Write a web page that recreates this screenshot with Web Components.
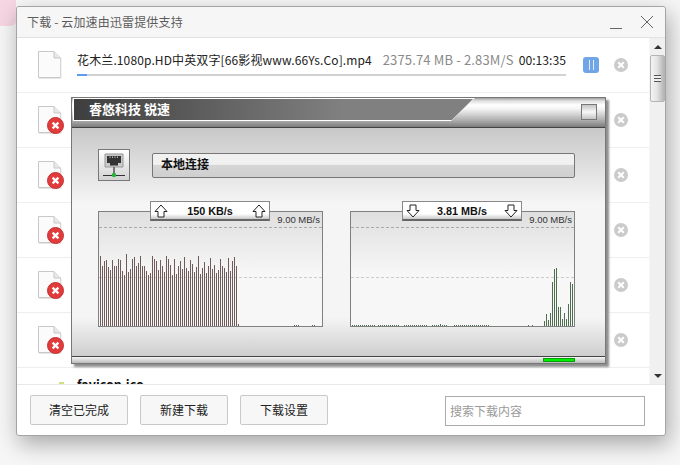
<!DOCTYPE html>
<html lang="zh">
<head>
<meta charset="utf-8">
<title>下载</title>
<style>
  html, body { margin: 0; height: 100%; }
  body {
    background: #f6f6f6;
    padding: 6px 0 0 16px;
    box-sizing: border-box;
    font-family: "Noto Sans CJK SC", "Noto Sans", sans-serif;
    overflow: hidden;
  }
  .desk-corner { position: absolute; left: 0; top: 0; width: 16px; height: 26px; background: #f6d6e2; border-bottom-right-radius: 5px; }
</style>
</head>
<body>
<div class="desk-corner"></div>
<dl-window heading="下载 - 云加速由迅雷提供支持">
  <dl-row name="花木兰.1080p.HD中英双字[66影视www.66Ys.Co].mp4" size="2375.74 MB - 2.83M/S" time="00:13:35" progress="2"></dl-row>
  <dl-row failed></dl-row>
  <dl-row failed></dl-row>
  <dl-row failed></dl-row>
  <dl-row failed></dl-row>
  <dl-row failed></dl-row>
  <dl-row name="favicon.ico" small></dl-row>
  <speed-panel slot="overlay" heading="睿悠科技 锐速" adapter="本地连接">
    <speed-chart dir="up" value="150 KB/s" max="9.00 MB/s" color="#705a5a"
      bars="1:70,2:60,3:65,4:66,5:59,6:56,7:66,8:60,9:60,10:67,11:66,12:55,13:51,14:72,15:54,16:57,17:67,18:69,19:60,20:63,21:70,22:60,23:60,24:55,25:51,26:53,27:70,28:67,29:65,30:56,31:66,32:60,33:54,34:70,35:67,36:61,37:51,38:67,39:52,40:60,41:65,42:57,43:69,44:58,45:55,46:66,47:62,48:54,49:59,50:70,51:52,52:58,53:64,54:53,55:60,56:68,57:57,58:61,59:53,60:56,61:67,62:60,63:58,64:54,65:68,66:55,67:65,68:69,69:60,70:2,98:1,99:1,100:1,107:1,108:1"></speed-chart>
    <speed-chart dir="down" value="3.81 MB/s" max="9.00 MB/s" color="#4f6e4f"
      bars="1:1,2:1,3:1,4:1,5:1,6:1,7:1,8:1,9:1,10:1,11:1,12:1,14:1,15:1,16:1,17:1,18:1,19:1,20:1,21:1,22:1,23:1,24:1,27:1,28:1,29:1,30:1,31:1,32:1,33:1,34:1,35:1,36:1,37:1,38:1,41:1,42:1,43:1,44:1,45:2,46:1,47:1,48:1,52:1,53:1,54:1,55:1,56:1,57:1,58:1,59:1,60:1,61:1,62:1,63:1,64:1,65:1,66:1,67:1,68:1,69:1,89:1,91:1,97:5,98:12,99:6,100:13,101:44,102:57,103:58,104:19,105:19,106:7,107:13,108:7,109:22,110:44,111:42"></speed-chart>
  </speed-panel>
</dl-window>

<script>
var icons = {
  page: '<path d="M1.5 .5H17L23.5 7V26.5H1.5Z" fill="#fbfbfb" stroke="#c8c8c8"/><path d="M17 .5V7H23.5" fill="#e8e8e8" stroke="#c8c8c8"/><path d="M2 27.5H24V8" fill="none" stroke="#e6e6e6"/>',
  up: '<path d="M7 1 13 7.5H10V13H4V7.5H1Z" fill="#fff" stroke="#222"/>',
  down: '<path d="M4 1H10V6.5H13L7 13 1 6.5H4Z" fill="#fff" stroke="#222"/>'
};

var dlWindow = document.createElement('template');
dlWindow.innerHTML = `
  <style>
    :host {
      display: flex;
      flex-direction: column;
      position: relative;
      box-sizing: border-box;
      width: 650px;
      height: 430px;
      background: #fff;
      border: 1px solid #a3a3a8;
      border-radius: 3px;
      box-shadow: 3px 8px 22px rgba(0,0,0,.32);
    }
    .bar {
      display: flex;
      align-items: center;
      height: 30px;
      flex: none;
      padding: 0 12px 0 10px;
      background: #f6f6f6;
      border-bottom: 1px solid #e2e2e2;
      border-radius: 3px 3px 0 0;
      color: #5c5c5c;
      font-size: 12px;
      letter-spacing: .15px;
    }
    .bar span { flex: 1; margin-top: -2px; }
    .bar svg { display: block; }
    .main { flex: 1; display: flex; min-height: 0; }
    .list { flex: 1; min-width: 0; overflow: hidden; }
    .foot {
      flex: none;
      display: flex;
      align-items: center;
      gap: 12px;
      height: 50px;
      padding: 0 20px 0 13px;
      border-top: 1px solid #e8e8e8;
    }
    .search {
      margin: 2px 0 0 auto;
      width: 200px;
      height: 30px;
      box-sizing: border-box;
      border: 1px solid #ababab;
      color: #9a9a9a;
      font-size: 12px;
      line-height: 27px;
      padding-left: 4px;
    }
  </style>
  <div class="bar">
    <span id="t"></span>
    <svg width="43" height="16" viewBox="0 0 43 16">
      <path d="M0 14.5H12" stroke="#666"/>
      <path d="M31 2 43 14M43 2 31 14" stroke="#666" fill="none"/>
    </svg>
  </div>
  <div class="main">
    <div class="list"><slot></slot></div>
    <dl-scrollbar></dl-scrollbar>
  </div>
  <div class="foot">
    <dl-button w="98">清空已完成</dl-button>
    <dl-button w="88">新建下载</dl-button>
    <dl-button w="88">下载设置</dl-button>
    <div class="search">搜索下载内容</div>
  </div>
  <slot name="overlay"></slot>
`;
customElements.define('dl-window', class extends HTMLElement {
  constructor() {
    super();
    var root = this.attachShadow({mode: 'open'});
    root.appendChild(dlWindow.content.cloneNode(true));
    root.getElementById('t').textContent = this.getAttribute('heading');
  }
});

var dlButton = document.createElement('template');
dlButton.innerHTML = `
  <style>
    :host {
      display: block;
      box-sizing: border-box;
      height: 30px;
      background: #f7f7f7;
      border: 1px solid #c9c9c9;
      border-radius: 2px;
      color: #222;
      font-size: 12px;
      line-height: 27px;
      text-align: center;
    }
  </style>
  <slot></slot>
`;
customElements.define('dl-button', class extends HTMLElement {
  constructor() {
    super();
    this.attachShadow({mode: 'open'}).appendChild(dlButton.content.cloneNode(true));
    this.style.width = this.getAttribute('w') + 'px';
  }
});

var dlScrollbar = document.createElement('template');
dlScrollbar.innerHTML = `
  <style>
    :host {
      display: flex;
      flex-direction: column;
      align-items: center;
      flex: none;
      width: 16px;
      background: #f0f0f0;
      border-left: 1px solid #f6f6f6;
      box-sizing: border-box;
    }
    .arrow { width: 0; height: 0; border: 4px solid transparent; }
    .a1 { border-bottom: 4px solid #333; border-top: 0; margin-top: 7px; }
    .thumb {
      box-sizing: border-box;
      width: 15px;
      height: 47px;
      margin-top: 6px;
      border: 1px solid #b5b5b5;
      border-radius: 2px;
      background: linear-gradient(to right, #f4f4f4, #e4e4e4 45%, #b4b4b4);
      display: flex;
      align-items: center;
      justify-content: center;
    }
    .grip { width: 7px; height: 7px; background: repeating-linear-gradient(to bottom, #555 0 1px, #eee 1px 3px); }
    .a2 { border-top: 4px solid #333; border-bottom: 0; margin-top: auto; margin-bottom: 6px; }
  </style>
  <div class="arrow a1"></div>
  <div class="thumb"><div class="grip"></div></div>
  <div class="arrow a2"></div>
`;
customElements.define('dl-scrollbar', class extends HTMLElement {
  constructor() {
    super();
    this.attachShadow({mode: 'open'}).appendChild(dlScrollbar.content.cloneNode(true));
  }
});

var dlRow = document.createElement('template');
dlRow.innerHTML = `
  <style>
    :host {
      display: flex;
      align-items: center;
      box-sizing: border-box;
      height: 55px;
      padding: 0 21px 0 20px;
      border-bottom: 1px solid #eee;
      font-size: 12px;
      color: #222;
    }
    :host([small]) { align-items: flex-start; }
    .icon { position: relative; flex: none; width: 25px; height: 28px; }
    .icon svg { display: block; }
    .badge { position: absolute; left: 10px; top: 11px; }
    .body { flex: 1; min-width: 0; margin-left: 15px; }
    .line { display: flex; white-space: nowrap; height: 20px; line-height: 20px; margin-top: -4px; }
    .name { flex: 1; letter-spacing: .125px; }
    .size { color: #8a8a8a; margin-right: 5px; font-size: 13px; letter-spacing: .15px; }
    .time { font-size: 12.2px; }
    .track { height: 2px; margin-top: 4px; background: #d2d2d2; }
    .fill { height: 100%; background: #5b9cf0; }
    .pause {
      flex: none;
      box-sizing: border-box;
      width: 16px;
      height: 16px;
      margin-left: 17px;
      border-radius: 3px;
      background: #70a5e8;
      display: flex;
      align-items: center;
      justify-content: center;
    }
    .pause i { width: 3px; height: 10px; border: solid #dfeafa; border-width: 0 1px; }
    .del { flex: none; display: block; margin-left: 15px; }
    .gap { flex: 1; }
    .small { display: flex; gap: 13px; padding: 8px 0 0 22px; font-weight: 700; font-size: 12.5px; line-height: 15px; color: #111; }
    .small i { width: 5px; height: 6px; margin-top: 6px; background: #d6dc83; }
  </style>
`;
customElements.define('dl-row', class extends HTMLElement {
  constructor() {
    super();
    var root = this.attachShadow({mode: 'open'});
    root.appendChild(dlRow.content.cloneNode(true));
    var del = '<svg class="del" width="14" height="14" viewBox="0 0 14 14"><circle cx="7" cy="7" r="7" fill="#cbcbcb"/><path d="M4.2 4.2 9.8 9.8M9.8 4.2 4.2 9.8" stroke="#fff" stroke-width="2"/></svg>';
    var page = '<svg width="25" height="28" viewBox="0 0 25 28">' + icons.page + '</svg>';
    var box = document.createElement('div');
    if (this.hasAttribute('small')) {
      box.className = 'small';
      box.innerHTML = '<i></i><span></span>';
      box.querySelector('span').textContent = this.getAttribute('name');
      root.appendChild(box);
      return;
    }
    var badge = this.hasAttribute('failed') ? '<svg class="badge" width="17" height="17" viewBox="0 0 17 17"><circle cx="8.5" cy="8.5" r="8" fill="#e23b3b" stroke="#c43232"/><path d="M5.6 5.6 11.4 11.4M11.4 5.6 5.6 11.4" stroke="#fff" stroke-width="2.2"/></svg>' : '';
    var html = '<div class="icon">' + page + badge + '</div>';
    if (this.hasAttribute('name')) {
      html += '<div class="body"><div class="line"><span class="name"></span><span class="size"></span><span class="time"></span></div>' +
        '<div class="track"><div class="fill" style="width:' + this.getAttribute('progress') + '%"></div></div></div>' +
        '<div class="pause"><i></i></div>';
    } else {
      html += '<div class="gap"></div>';
    }
    box.style.display = 'contents';
    box.innerHTML = html + del;
    root.appendChild(box);
    if (this.hasAttribute('name')) {
      root.querySelector('.name').textContent = this.getAttribute('name');
      root.querySelector('.size').textContent = this.getAttribute('size');
      root.querySelector('.time').textContent = this.getAttribute('time');
    }
  }
});

var speedPanel = document.createElement('template');
speedPanel.innerHTML = `
  <style>
    :host {
      position: absolute;
      left: 54px;
      top: 90px;
      display: flex;
      flex-direction: column;
      box-sizing: border-box;
      width: 535px;
      height: 267px;
      border: 1px solid #777;
      box-shadow: 3px 3px 2px #8f8f8f;
      background: #f5f5f5;
    }
    .head {
      flex: none;
      display: flex;
      justify-content: space-between;
      box-sizing: border-box;
      height: 30px;
      border-bottom: 1px solid #444;
      background: linear-gradient(to bottom, #a0a0a0, #e0e0e0 3px, #fff 7px, #f4f4f4 11px, #b0b0b0 22px, #7c7c7c 29px);
    }
    .cap {
      width: 402px;
      height: 23px;
      margin-left: 1px;
      background: #fff;
      clip-path: polygon(0 0, 100% 0, 378px 100%, 0 100%);
      padding: 1px 0 1px 1px;
      box-sizing: border-box;
    }
    .cap div {
      height: 100%;
      padding-left: 15px;
      clip-path: polygon(0 0, 399px 0, 378px 100%, 0 100%);
      background: linear-gradient(to right, #3e3e3e, #808080 268px);
      color: #fff;
      font-size: 13px;
      font-weight: 700;
      line-height: 19px;
    }
    .max {
      box-sizing: border-box;
      width: 16px;
      height: 16px;
      margin: 6px 8px 0 0;
      border: 1px solid #777;
      background: linear-gradient(to bottom, #c4c4c4, #f8f8f8 50%, #c4c4c4);
    }
    .body {
      flex: 1;
      min-height: 0;
      background: linear-gradient(to bottom, #c8c8c8, #f5f5f5 33%, #f5f5f5 83%, #cecece);
      border-bottom: 1px solid #444;
      padding: 21px 30px 0 26px;
    }
    .adapter { display: flex; gap: 22px; align-items: center; }
    .net {
      box-sizing: border-box;
      width: 32px;
      height: 32px;
      border: 1px solid #777;
      background: linear-gradient(to bottom, #fff, #d2d2d2);
      display: block;
      flex: none;
    }
    .name {
      flex: 1;
      box-sizing: border-box;
      height: 25px;
      border: 1px solid #777;
      border-radius: 2px;
      background: linear-gradient(to bottom, #f1f1f1, #f1f1f1 45%, #d6d6d6 50%, #cfcfcf);
      color: #111;
      font-size: 12px;
      font-weight: 700;
      line-height: 20px;
      padding-left: 8px;
    }
    .charts { display: flex; justify-content: space-between; margin-top: 30px; }
    .status {
      flex: none;
      height: 6px;
      background: linear-gradient(to bottom, #f5f5f5, #bbb);
      display: flex;
      justify-content: flex-end;
      padding-right: 30px;
    }
    .status i { width: 32px; height: 4px; box-sizing: border-box; margin-top: 1px; background: #00f000; border: 1px solid #0a9a0a; }
  </style>
  <div class="head">
    <div class="cap"><div id="t"></div></div>
    <div class="max"></div>
  </div>
  <div class="body">
    <div class="adapter">
      <svg class="net" viewBox="0 0 30 30">
        <path d="M6 4H24V17H6Z" fill="#c9c9c9" stroke="#999"/>
        <path d="M8 6H22V13H19V15.5H11V13H8Z" fill="#333"/>
        <path d="M11 6.5V8M13.5 6.5V8M16 6.5V8M18.500 6.5V8" stroke="#bbb"/>
        <path d="M15 17V25" stroke="#777" stroke-width="2"/>
        <path d="M4 25.500H26" stroke="#333"/>
        <circle cx="15" cy="25" r="2.200" fill="#25b53a"/>
      </svg>
      <div class="name" id="n"></div>
    </div>
    <div class="charts"><slot></slot></div>
  </div>
  <div class="status"><i></i></div>
`;
customElements.define('speed-panel', class extends HTMLElement {
  constructor() {
    super();
    var root = this.attachShadow({mode: 'open'});
    root.appendChild(speedPanel.content.cloneNode(true));
    root.getElementById('t').textContent = this.getAttribute('heading');
    root.getElementById('n').textContent = this.getAttribute('adapter');
  }
});

var speedChart = document.createElement('template');
speedChart.innerHTML = `
  <style>
    :host {
      display: block;
      position: relative;
      box-sizing: border-box;
      width: 225px;
      height: 116px;
      border: 1px solid #808080;
      background: linear-gradient(to bottom, #dfdfdf, #f7f7f7 55%);
      font-family: "Liberation Sans", sans-serif;
      color: #111;
    }
    svg.plot { display: block; }
    .pill {
      position: absolute;
      left: 51px;
      top: -11px;
      box-sizing: border-box;
      width: 120px;
      height: 20px;
      border: 1px solid #888;
      border-bottom: 2px solid #666;
      background: linear-gradient(to bottom, #fff, #fff 70%, #c8c8c8);
      display: flex;
      align-items: center;
      justify-content: space-between;
      padding: 0 3px;
      font-size: 10.8px;
      font-weight: 700;
    }
    .pill svg { display: block; }
    .max { position: absolute; right: 2px; top: 2px; font-size: 9.5px; line-height: 12px; color: #333; }
  </style>
  <svg class="plot" width="223" height="114" viewBox="0 0 223 114"></svg>
  <div class="pill"></div>
  <div class="max"></div>
`;
customElements.define('speed-chart', class extends HTMLElement {
  constructor() {
    super();
    var root = this.attachShadow({mode: 'open'});
    root.appendChild(speedChart.content.cloneNode(true));
    var svg = '<path d="M0 15.500H223" stroke="#aaa" stroke-dasharray="3 2"/><path d="M0 65.500H223" stroke="#ccc" stroke-dasharray="3 2"/>';
    this.getAttribute('bars').split(',').forEach(function (b) {
      var p = b.split(':');
      svg += '<rect x="' + (p[0] * 2 - 1) + '" y="' + (114 - p[1]) + '" width="1" height="' + p[1] + '"/>';
    });
    var plot = root.querySelector('.plot');
    plot.setAttribute('fill', this.getAttribute('color'));
    plot.innerHTML = svg;
    var arrow = '<svg width="14" height="14" viewBox="0 0 14 14">' + icons[this.getAttribute('dir')] + '</svg>';
    var pill = root.querySelector('.pill');
    pill.innerHTML = arrow + '<span></span>' + arrow;
    pill.querySelector('span').textContent = this.getAttribute('value');
    root.querySelector('.max').textContent = this.getAttribute('max');
  }
});
</script>
</body>
</html>
